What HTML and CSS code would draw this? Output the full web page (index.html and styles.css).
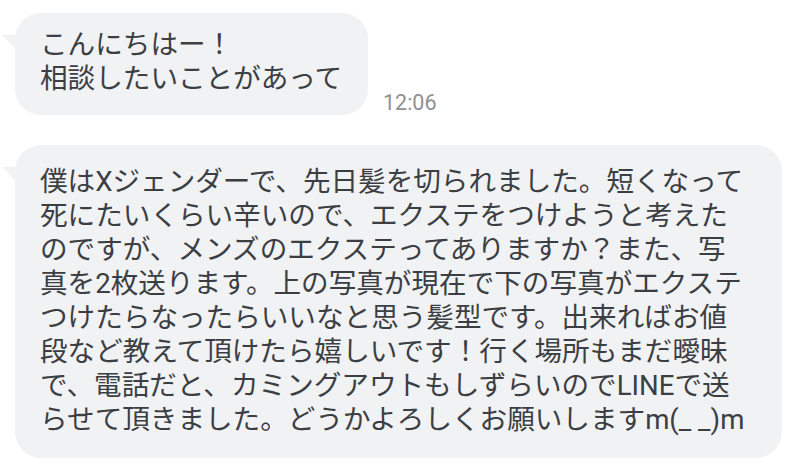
FILE: index.html
```html
<!DOCTYPE html>
<html lang="ja">
<head>
<meta charset="utf-8">
<title>chat</title>
<link rel="stylesheet" href="styles.css">
</head>
<body>
<div class="chat">
  <div class="row">
    <div class="bubble bubble-short">
      <p class="text">こんにちはー！<br>相談したいことがあって</p>
    </div>
    <span class="time">12:06</span>
  </div>
  <div class="row">
    <div class="bubble bubble-long">
      <p class="text">僕はXジェンダーで、先日髪を切られました。短くなって<br>死にたいくらい辛いので、エクステをつけようと考えた<br>のですが、メンズのエクステってありますか？また、写<br>真を2枚送ります。上の写真が現在で下の写真がエクステ<br>つけたらなったらいいなと思う髪型です。出来ればお値<br>段など教えて頂けたら嬉しいです！行く場所もまだ曖昧<br>で、電話だと、カミングアウトもしずらいのでLINEで送<br>らせて頂きました。どうかよろしくお願いしますm(_ _)m</p>
    </div>
  </div>
</div>
</body>
</html>
```

FILE: styles.css
```css
html, body {
  margin: 0;
  padding: 0;
  background: #ffffff;
}

body {
  font-family: Roboto, "Noto Sans CJK JP", sans-serif;
  color: #3b3e43;
}

.chat {
  display: flex;
  flex-direction: column;
  gap: 30px;
  padding: 13px 0 0 15px;
}

.row {
  display: flex;
  align-items: flex-end;
  gap: 15px;
}

.bubble {
  position: relative;
  background: #f1f2f4;
  border-radius: 26px;
  box-sizing: border-box;
  padding: 0 25px;
}

.bubble::before {
  content: "";
  position: absolute;
  left: -13px;
  top: 22px;
  width: 14px;
  height: 14px;
  background: #f1f2f4;
  clip-path: polygon(0 0, 100% 0, 100% 100%);
}

.bubble-short {
  width: 353px;
  height: 102px;
  padding-top: 15px;
}

.bubble-long {
  width: 767px;
  height: 313px;
  padding-top: 20px;
}

.text {
  margin: 0;
  font-size: 27.6px;
  line-height: 34px;
  white-space: nowrap;
}

.time {
  font-family: Roboto, sans-serif;
  font-size: 21.5px;
  line-height: 1;
  color: #8e9195;
  padding-bottom: 2px;
}
```
